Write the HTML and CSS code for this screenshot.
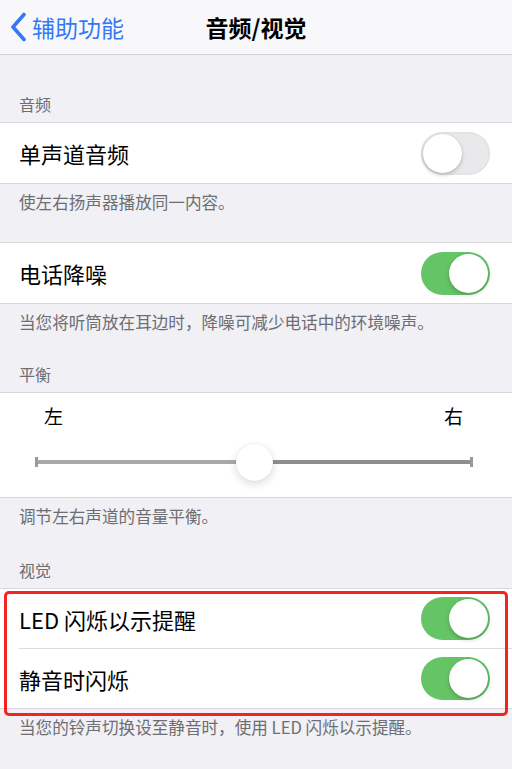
FILE: index.html
```html
<!DOCTYPE html>
<html lang="zh-CN">
<head>
  <meta charset="UTF-8">
  <meta name="viewport" content="width=device-width, initial-scale=1.0">
  <title>音频/视觉</title>
  <link rel="stylesheet" href="styles.css">
</head>
<body>
  <nav class="nav">
    <a class="back" href="#">
      <svg class="chevron" width="20" height="30" viewBox="0 0 20 30"><path d="M16 2.5 L5 15 L16 27.5" fill="none" stroke="#3478f6" stroke-width="3.6" stroke-linecap="round" stroke-linejoin="round"/></svg>
      <span>辅助功能</span>
    </a>
    <h1 class="title">音频/视觉</h1>
    <span></span>
  </nav>

  <section class="section first">
    <div class="header">音频</div>
    <div class="group">
      <div class="row">
        <span class="label">单声道音频</span>
        <span class="toggle"></span>
      </div>
    </div>
    <div class="footer">使左右扬声器播放同一内容。</div>
  </section>

  <section class="section no-header">
    <div class="group">
      <div class="row">
        <span class="label">电话降噪</span>
        <span class="toggle on"></span>
      </div>
    </div>
    <div class="footer">当您将听筒放在耳边时，降噪可减少电话中的环境噪声。</div>
  </section>

  <section class="section">
    <div class="header">平衡</div>
    <div class="balance">
      <div class="ends"><span>左</span><span>右</span></div>
      <div class="slider">
        <div class="track"></div>
        <div class="thumb"></div>
      </div>
    </div>
    <div class="footer">调节左右声道的音量平衡。</div>
  </section>

  <section class="section last">
    <div class="header">视觉</div>
    <div class="group marked">
      <div class="row">
        <span class="label">LED 闪烁以示提醒</span>
        <span class="toggle on"></span>
      </div>
      <div class="row">
        <span class="label">静音时闪烁</span>
        <span class="toggle on"></span>
      </div>
    </div>
    <div class="footer">当您的铃声切换设至静音时，使用 LED 闪烁以示提醒。</div>
  </section>
</body>
</html>
```

FILE: styles.css
```css
body {
  margin: 0;
  background: #f0f0f5;
  font-family: "Noto Sans CJK SC", "Noto Sans", sans-serif;
  color: #000;
  height: 769px;
  overflow: hidden;
}

.nav {
  height: 54px;
  display: grid;
  grid-template-columns: 1fr auto 1fr;
  align-items: center;
  background: #f8f8fa;
  border-bottom: 1px solid #d4d4d8;
}
.back { display: flex; align-items: center; gap: 4px; color: #3478f6; text-decoration: none; font-size: 23px; padding-left: 8px; }
.back span { line-height: 30px; }
.chevron { display: block; }
.title { margin: 0; font-size: 23px; font-weight: 700; line-height: 30px; }

.section { margin-top: 32px; }
.section.first { margin-top: 39px; }
.section.no-header { margin-top: 30px; }
.section.last { margin-top: 34px; }

.header, .footer {
  font-size: 16px;
  line-height: 20px;
  color: #6d6d72;
  padding: 0 19px;
}
.header { padding-bottom: 8px; }
.footer { padding-top: 8px; font-size: 16.6px; }

.group {
  background: #fff;
  border-top: 1px solid #d8d8dc;
  border-bottom: 1px solid #d8d8dc;
  padding-left: 19px;
}
.row {
  height: 59px;
  display: flex;
  align-items: center;
  justify-content: space-between;
  padding-right: 22px;
}
.group > .row:only-child { height: 60px; }
.row + .row { border-top: 1px solid #dcdcdf; }
.label { font-size: 22px; }

.toggle {
  width: 69px;
  height: 43px;
  border-radius: 22px;
  background: #e9e9eb;
  box-shadow: inset 0 0 0 1.5px #e2e2e4;
  position: relative;
  display: block;
}
.toggle::after {
  content: "";
  position: absolute;
  top: 2px;
  left: 2px;
  width: 39px;
  height: 39px;
  border-radius: 50%;
  background: #fff;
  box-shadow: 0 2px 4px rgba(0,0,0,0.2), 0 0 1px rgba(0,0,0,0.15);
}
.toggle.on { background: #65c466; box-shadow: none; }
.toggle.on::after { left: 28px; }

.balance {
  background: #fff;
  border-top: 1px solid #d8d8dc;
  border-bottom: 1px solid #d8d8dc;
  padding-top: 11px;
  height: 93px;
}
.ends {
  display: flex;
  justify-content: space-between;
  padding: 0 49px 0 44px;
  font-size: 19px;
  line-height: 24px;
}
.slider {
  position: relative;
  margin: 14px 39px 0 35px;
  height: 40px;
  display: flex;
  align-items: center;
}
.track {
  flex: 1;
  height: 4px;
  background: linear-gradient(to right, #a8a8a8 50%, #8e8e8e 50%);
  position: relative;
}
.track::before, .track::after {
  content: "";
  position: absolute;
  top: -3px;
  width: 3px;
  height: 10px;
  background: #999;
}
.track::before { left: 0; }
.track::after { right: 0; }
.thumb {
  position: absolute;
  left: 50%;
  top: 50%;
  width: 37px;
  height: 37px;
  margin: -18px 0 0 -18px;
  border-radius: 50%;
  background: #fff;
  box-shadow: 0 3px 8px rgba(0,0,0,0.15), 0 0 1px rgba(0,0,0,0.1);
}

.marked { position: relative; }
.marked::after {
  content: "";
  position: absolute;
  top: 2px;
  bottom: -8px;
  left: 4px;
  right: 4px;
  border: 3px solid #f5231d;
  border-radius: 5px;
}
```
